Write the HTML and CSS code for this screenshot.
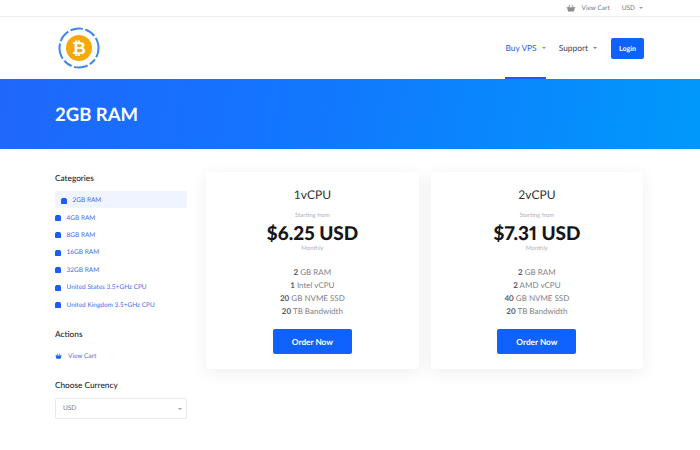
FILE: index.html
```html
<!DOCTYPE html>
<html lang="en">
<head>
<meta charset="utf-8">
<title>2GB RAM</title>
<link rel="stylesheet" href="styles.css">
</head>
<body>
<div class="topbar">
  <a class="top-link"><svg class="top-cart" viewBox="0 0 12 10"><path d="M0.5 4h11v1h-.7L9.6 9.5H2.4L1.2 5H.5z M2.5 4L4.5 .8l.8.5L3.8 4z M9.5 4L7.5 .8l-.8.5L8.2 4z"/></svg>View Cart</a>
  <a class="top-link top-cur">USD<i class="caret"></i></a>
</div>
<header class="header">
  <svg class="logo" viewBox="0 0 42 42">
    <circle class="logo-ring" cx="21" cy="21" r="19.5" transform="rotate(-105 21 21)"/>
    <circle class="logo-coin" cx="21" cy="21" r="13"/>
    <text class="logo-b" x="21" y="27" text-anchor="middle">₿</text>
  </svg>
  <nav class="nav">
    <a class="nav-item active">Buy VPS<i class="caret"></i></a>
    <a class="nav-item">Support<i class="caret"></i></a>
    <a class="login">Login</a>
  </nav>
</header>
<section class="hero"><h1>2GB RAM</h1></section>
<main class="main">
  <aside class="side">
    <h3 class="side-title">Categories</h3>
    <ul class="cats">
      <li class="cat current"><svg class="box" viewBox="0 0 8 8"><path d="M1.5 0h5L8 1.5V7a1 1 0 0 1-1 1H1a1 1 0 0 1-1-1V1.5z"/></svg>2GB RAM</li>
      <li class="cat"><svg class="box" viewBox="0 0 8 8"><path d="M1.5 0h5L8 1.5V7a1 1 0 0 1-1 1H1a1 1 0 0 1-1-1V1.5z"/></svg>4GB RAM</li>
      <li class="cat"><svg class="box" viewBox="0 0 8 8"><path d="M1.5 0h5L8 1.5V7a1 1 0 0 1-1 1H1a1 1 0 0 1-1-1V1.5z"/></svg>8GB RAM</li>
      <li class="cat"><svg class="box" viewBox="0 0 8 8"><path d="M1.5 0h5L8 1.5V7a1 1 0 0 1-1 1H1a1 1 0 0 1-1-1V1.5z"/></svg>16GB RAM</li>
      <li class="cat"><svg class="box" viewBox="0 0 8 8"><path d="M1.5 0h5L8 1.5V7a1 1 0 0 1-1 1H1a1 1 0 0 1-1-1V1.5z"/></svg>32GB RAM</li>
      <li class="cat"><svg class="box" viewBox="0 0 8 8"><path d="M1.5 0h5L8 1.5V7a1 1 0 0 1-1 1H1a1 1 0 0 1-1-1V1.5z"/></svg>United States 3.5+GHz CPU</li>
      <li class="cat"><svg class="box" viewBox="0 0 8 8"><path d="M1.5 0h5L8 1.5V7a1 1 0 0 1-1 1H1a1 1 0 0 1-1-1V1.5z"/></svg>United Kingdom 3.5+GHz CPU</li>
    </ul>
    <h3 class="side-title actions">Actions</h3>
    <div class="cat cart-link"><svg class="basket" viewBox="0 0 12 10"><path d="M0.5 4h11v1h-.7L9.6 9.5H2.4L1.2 5H.5z M2.5 4L4.5 .8l.8.5L3.8 4z M9.5 4L7.5 .8l-.8.5L8.2 4z"/></svg>View Cart</div>
    <h3 class="side-title currency">Choose Currency</h3>
    <div class="select">USD<i class="caret"></i></div>
  </aside>
  <div class="cards">
    <article class="card">
      <h2 class="plan">1vCPU</h2>
      <p class="small">Starting from</p>
      <p class="price">$6.25 USD</p>
      <p class="small">Monthly</p>
      <ul class="specs">
        <li><b>2</b> GB RAM</li>
        <li><b>1</b> Intel vCPU</li>
        <li><b>20</b> GB NVME SSD</li>
        <li><b>20</b> TB Bandwidth</li>
      </ul>
      <a class="order">Order Now</a>
    </article>
    <article class="card">
      <h2 class="plan">2vCPU</h2>
      <p class="small">Starting from</p>
      <p class="price">$7.31 USD</p>
      <p class="small">Monthly</p>
      <ul class="specs">
        <li><b>2</b> GB RAM</li>
        <li><b>2</b> AMD vCPU</li>
        <li><b>40</b> GB NVME SSD</li>
        <li><b>20</b> TB Bandwidth</li>
      </ul>
      <a class="order">Order Now</a>
    </article>
  </div>
</main>
</body>
</html>
```
FILE: styles.css
```css
* { box-sizing: border-box; }
html, body { margin: 0; padding: 0; }
body {
  width: 700px;
  height: 450px;
  overflow: hidden;
  background: #fff;
  font-family: "Lato", "Liberation Sans", sans-serif;
  color: #1d1d22;
  text-rendering: geometricPrecision;
}
h1, h2, h3, p, ul { margin: 0; padding: 0; }
ul { list-style: none; }

.topbar {
  height: 17px;
  border-bottom: 1px solid #eeeff2;
  display: flex;
  justify-content: flex-end;
  align-items: center;
  gap: 12px;
  padding-right: 57px;
  font-size: 6.5px;
  color: #77787e;
}
.top-link { display: flex; align-items: center; }
.top-cart { width: 10px; height: 8px; margin-right: 5px; fill: #8c8d92; }
.caret {
  display: inline-block;
  width: 0; height: 0;
  margin-left: 4px;
  border: 2px solid transparent;
  border-top-color: currentColor;
  border-bottom-width: 0;
  opacity: .7;
}

.header {
  height: 62px;
  display: flex;
  align-items: center;
  justify-content: space-between;
  padding: 0 56px 0 57.5px;
}
.logo { width: 42px; height: 42px; display: block; }
.logo-ring { fill: none; stroke: #4285ec; stroke-width: 2; stroke-dasharray: 9 2.5 11 2.5 20 2.5 7 2.5 14 2.5 9 2.5 16 2.5 12 2.5; }
.logo-coin { fill: #f5a908; }
.logo-b { font-family: "DejaVu Sans", sans-serif; font-weight: 700; font-size: 17px; fill: #fff; }

.nav { display: flex; align-items: center; height: 100%; }
.nav-item {
  height: 100%;
  display: flex;
  align-items: center;
  font-size: 8.4px;
  color: #44454b;
  margin-right: 14px;
  padding-top: 2px;
  border-bottom: 2px solid transparent;
}
.nav-item .caret { margin-left: 5px; }
.nav-item.active { color: #2a62f0; border-bottom-color: #0f62fe; margin-right: 13px; }
.login {
  width: 33px;
  height: 21px;
  margin-top: 1px;
  background: #0f62fe;
  color: #fff;
  font-size: 7px;
  font-weight: 700;
  border-radius: 2px;
  display: flex;
  align-items: center;
  justify-content: center;
}

.hero {
  height: 70px;
  background: linear-gradient(100deg, #1f67fb 0%, #1277fe 45%, #0099fb 100%);
  display: flex;
  align-items: center;
  padding: 1px 0 0 55px;
}
.hero h1 { color: #fff; font-size: 18.5px; font-weight: 700; line-height: 1; }

.main {
  display: flex;
  padding: 23px 0 0 55px;
}
.side { width: 132px; flex: none; margin-right: 19px; }
.side-title { font-size: 8.25px; font-weight: 500; color: #24242a; line-height: 12px; }
.cats { margin-top: 7px; display: flex; flex-direction: column; }
.cat {
  height: 17.4px;
  display: flex;
  align-items: center;
  padding-top: 2px;
  font-size: 6.5px;
  color: #4a6cec;
  white-space: nowrap;
}
.current {
  background: #f0f4fe;
  border-radius: 2px;
  padding-left: 6px;
}
.box { width: 6px; height: 6px; fill: #1a5ff2; margin-right: 5.5px; flex: none; }
.actions { margin-top: 15px; }
.cart-link { margin-top: 7px; }
.basket { width: 7px; height: 6px; fill: #1a5ff2; margin-right: 6px; flex: none; }
.currency { margin-top: 15px; }
.select {
  margin-top: 7px;
  height: 21px;
  border: 1px solid #e9eaee;
  border-radius: 2px;
  display: flex;
  align-items: center;
  justify-content: space-between;
  padding: 0 4px 0 7px;
  font-size: 6.5px;
  color: #77787e;
}

.cards { display: flex; gap: 11.75px; align-items: flex-start; }
.card {
  width: 212.75px;
  height: 197px;
  background: #fff;
  border-radius: 4px;
  box-shadow: 0 3px 16px rgba(30, 40, 70, .08);
  display: flex;
  flex-direction: column;
  align-items: center;
  padding-top: 15px;
}
.plan { font-size: 12px; font-weight: 400; line-height: 16px; color: #303038; }
.small { font-size: 6px; line-height: 8px; color: #b0b2bb; }
.plan + .small { margin-top: 9px; }
.price {
  font-size: 19px;
  font-weight: 900;
  line-height: 24px;
  color: #16161a;
  margin-top: 2px;
  margin-bottom: -1px;
  font-variant-numeric: proportional-nums;
}
.specs { margin-top: 12.5px; text-align: center; font-size: 8px; line-height: 13.25px; color: #7f8088; }
.specs b { font-weight: 700; color: #5d5e65; }
.order {
  margin-top: 10.5px;
  width: 79px;
  height: 25px;
  background: #0f62fe;
  border-radius: 2px;
  color: #fff;
  font-size: 8.25px;
  font-weight: 700;
  display: flex;
  align-items: center;
  justify-content: center;
}
```
